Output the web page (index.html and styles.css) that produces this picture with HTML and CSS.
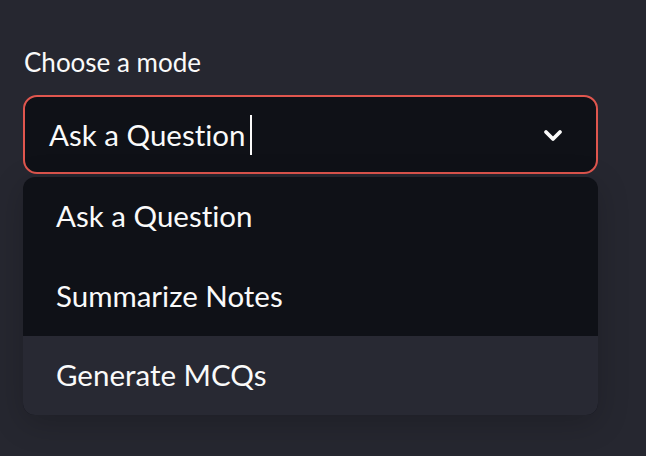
FILE: index.html
```html
<!DOCTYPE html>
<html>
<head>
<meta charset="utf-8">
<link rel="stylesheet" href="styles.css">
</head>
<body>
<div class="widget">
  <label class="label">Choose a mode</label>
  <div class="select">
    <div class="value"><span>Ask a Question</span><span class="caret"></span></div>
    <svg class="chevron" width="20" height="14" viewBox="0 0 20 14"><polyline points="3,3 10,10 17,3" fill="none" stroke="#fafafa" stroke-width="3.8" stroke-linecap="round" stroke-linejoin="round"/></svg>
  </div>
  <ul class="menu">
    <li class="option">Ask a Question</li>
    <li class="option">Summarize Notes</li>
    <li class="option active">Generate MCQs</li>
  </ul>
</div>
</body>
</html>
```
FILE: styles.css
```css
* { box-sizing: border-box; }
body {
  margin: 0;
  background: #262730;
  font-family: "Lato", "Noto Sans", sans-serif;
  font-variant-ligatures: none;
  color: #fafafa;
  height: 456px;
  overflow: hidden;
}
.widget {
  width: 575px;
  margin-left: 23px;
  padding-top: 44px;
  display: flex;
  flex-direction: column;
}
.label {
  font-size: 26px;
  line-height: 36px;
  height: 36px;
  padding-left: 1px;
  margin-bottom: 15px;
}
.select {
  height: 79px;
  border: 2px solid #e0564e;
  border-radius: 14px;
  background: #0f1117;
  display: flex;
  align-items: center;
  justify-content: space-between;
  padding: 0 33px 0 24px;
}
.value {
  display: flex;
  align-items: center;
  font-size: 29.5px;
}
.caret {
  width: 2px;
  height: 40px;
  background: #fafafa;
  margin-left: 4px;
}
.chevron { display: block; margin-top: 2px; }
.menu {
  list-style: none;
  margin: 3px 0 0 0;
  padding: 0;
  background: #0f1117;
  border-radius: 12px;
  overflow: hidden;
  box-shadow: 0 8px 32px rgba(0, 0, 0, 0.2);
}
.option {
  height: 79.4px;
  display: flex;
  align-items: center;
  padding-left: 33px;
  padding-bottom: 2px;
  font-size: 29.5px;
}
.option.active { background: #282933; }
```
